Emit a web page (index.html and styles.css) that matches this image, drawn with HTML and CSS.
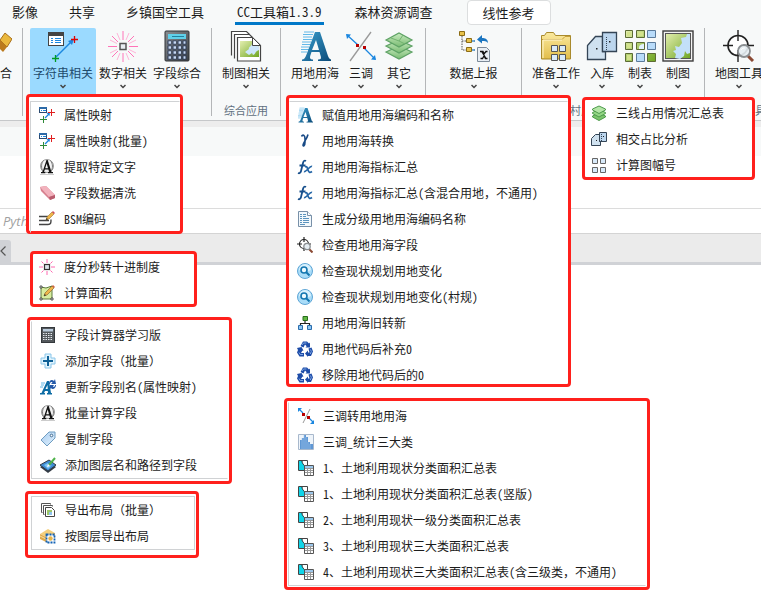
FILE: index.html
```html
<!DOCTYPE html>
<html lang="zh-CN">
<head>
<meta charset="utf-8">
<title>CC工具箱1.3.9</title>
<link rel="stylesheet" href="styles.css">
</head>
<body>
<svg class="sprite" aria-hidden="true">
  <defs>
    <linearGradient id="blueA" x1="0" y1="0" x2="1" y2="1"><stop offset="0" stop-color="#3aa0d0"/><stop offset="1" stop-color="#0b4a78"/></linearGradient>
    <linearGradient id="greenG" x1="0" y1="0" x2="1" y2="1"><stop offset="0" stop-color="#e4efb0"/><stop offset="1" stop-color="#6fa521"/></linearGradient>
    <linearGradient id="layerG" x1="0" y1="0" x2="0" y2="1"><stop offset="0" stop-color="#c9ecc0"/><stop offset="1" stop-color="#79bb72"/></linearGradient>
    <linearGradient id="folderG" x1="0" y1="0" x2="0" y2="1"><stop offset="0" stop-color="#fbeaa0"/><stop offset="1" stop-color="#e2bd4a"/></linearGradient>
    <linearGradient id="calcG" x1="0" y1="0" x2="1" y2="1"><stop offset="0" stop-color="#8a8e92"/><stop offset="1" stop-color="#3c4044"/></linearGradient>
    <linearGradient id="skyG" x1="0" y1="0" x2="1" y2="1"><stop offset="0" stop-color="#a9cdf0"/><stop offset="1" stop-color="#e2f1fd"/></linearGradient>
  </defs>

  <symbol id="map-attr" viewBox="0 0 32 32">
    <path d="M9 27 25 11" stroke="#1b87e0" stroke-width="1.4"/><path d="m27 9-2 6-4-4z" fill="#1b87e0"/>
    <rect x="1.500" y="2.500" width="15" height="13" fill="#fff" stroke="#444"/><path d="M2 3h14v3H2z" fill="#444"/>
    <path d="M4 8.500h2m2 0h6M4 10.500h2m2 0h6M4 12.500h2m2 0h6" stroke="#1b87e0"/>
    <path d="M24 9.500h7M27.500 6v7" stroke="#e00000" stroke-width="1.300"/><path d="M5 28.500h7M8.500 25v7" stroke="#009a20" stroke-width="1.300"/>
  </symbol>
  <symbol id="map-attr-s" viewBox="0 0 16 16">
    <rect x=".5" y=".5" width="7" height="5" fill="#fff" stroke="#2c4a70"/><path d="M0 0h8v2H0z" fill="#2c6aa8"/><path d="M2 3.500h1m1 0h3" stroke="#1b87e0"/>
    <path d="m6 11 4-4" stroke="#1b87e0" stroke-width="1.300"/><path d="m11 5-.5 4L7.500 6z" fill="#1b87e0"/>
    <path d="M9 5.500h7M12.500 2v7" stroke="#e02020"/><path d="M1 12.500h7M4.500 9v7" stroke="#2e8a38"/>
  </symbol>
  <symbol id="spark" viewBox="0 0 32 32">
    <path d="M16 1v9M16 23v9M1 16.500h9M22 16.500h9M5 6l6 6M27 6l-6 6M5 27l6-6M27 27l-6-6" stroke="#ff74b8"/>
    <path d="M10 3l3 7M22 3l-3 7M10 30l3-7M22 30l-3-7M3 10l7 3.500M29 10l-7 3.500M3 23l7-3.500M29 23l-7-3.500" stroke="#ffb4d8"/>
    <rect x="13" y="13.500" width="6" height="6" fill="#e8eef2" stroke="#555" stroke-width="1.500"/>
  </symbol>
  <symbol id="spark-s" viewBox="0 0 16 16">
    <path d="M8 0v4M8 12v4M0 8h4M12 8h4M2.500 2.500l2 2M13.500 2.500l-2 2M2.500 13.500l2-2M13.500 13.500l-2-2" stroke="#ff68b0"/>
    <rect x="5.500" y="5.500" width="5" height="5" fill="#dbe6ec" stroke="#333" stroke-width="1.200"/>
  </symbol>
  <symbol id="calc" viewBox="0 0 32 32">
    <rect x="4" y="1" width="24" height="30" rx="1" fill="url(#calcG)" stroke="#2e3236"/><path d="M7 4h18v5H7z" fill="#5fd0ea"/><path d="M11 6.500h12" stroke="#23809c"/>
    <path d="M6.500 12.500h19M6.500 17.500h19M6.500 22.500h19M6.500 27.500h19" stroke="#2b3b5a" stroke-width="4" stroke-dasharray="4 1"/>
    <path d="M7.500 12.500h17M7.500 17.500h17M7.500 22.500h17M7.500 27.500h17" stroke="#c7d8f0" stroke-width="2.500" stroke-dasharray="2.500 2.500"/>
  </symbol>
  <symbol id="calc-s" viewBox="0 0 16 16">
    <rect x="1.500" y=".5" width="13" height="15" fill="#53585c" stroke="#34383c"/><path d="M3 2h10v2.500H3z" fill="#bcd"/>
    <path d="M3 6.500h10M3 8.500h10M3 10.500h10M3 12.500h10" stroke="#e4e8ee" stroke-dasharray="1.500 1"/>
  </symbol>
  <symbol id="maps" viewBox="0 0 32 32">
    <path d="M1.500 25.500v-24h15l3 3" fill="#fff" stroke="#444" stroke-width="1.200"/><path d="M4.500 28.500v-24h15l3 3" fill="#fff" stroke="#444" stroke-width="1.200"/>
    <path d="M7.500 7.500h15l8 8V31h-23z" fill="#fff" stroke="#444" stroke-width="1.200"/>
    <path d="M10 11h13l6 6v10H10z" fill="url(#greenG)"/><path d="M22 14c-1 3-4 3-3 5l-4 3 4 3 3-2 1 2c3-1 2-4 6-5v-3l-5-5z" fill="#cde6fb"/><path d="M22.500 7.500v8h8z" fill="#fff" stroke="#444"/>
  </symbol>
  <symbol id="letter-a" viewBox="0 0 32 32">
    <path d="M5 2h10M4 4.500h10M4 7h9M4 9.500h9M3 12h9M3 14.500h9M2 17h8M2 19.500h8M2 22h6" stroke="#62b8e8" stroke-width="1"/>
    <path fill-rule="evenodd" d="M16 2h5l8 24c.7 2 1.500 3 3 3.500V31H19v-1.500c3 0 3.500-1 2.500-4l-1-3.500h-8l-1 3c-1 3-.4 4.500 2.500 4.500V31H3v-1.500c2 0 3.500-2 4.500-5zM17 10l-4 10h7z" fill="url(#blueA)"/>
  </symbol>
  <symbol id="split" viewBox="0 0 32 32">
    <path d="M5 31 26 2" stroke="#999" stroke-width="1.300"/><path d="m2 5 11 10M19 18l11 11" stroke="#1b87e0" stroke-width="1.300"/>
    <path d="m1 4 5 .5L2 9zM31 30l-5-.5 4-4.500z" fill="#1b87e0"/><path d="M11 14h3v3h-3zM18 16h3v3h-3z" fill="#b80000"/>
  </symbol>
  <symbol id="split-s" viewBox="0 0 16 16">
    <path d="M5 15 12 1" stroke="#999"/><path d="m1 1 4 4M11 10l4 4" stroke="#1b87e0" stroke-width="1.200"/><path d="M0 0h4L0 4zM16 16h-4l4-4z" fill="#1b87e0"/><path d="M4 5h3v3H4zM9 8h3v3H9z" fill="#b80000"/>
  </symbol>
  <symbol id="layers" viewBox="0 0 32 32">
    <g stroke="#5ea265" stroke-width="1.200"><path d="m3 22 13-6 13 6-13 7z" fill="url(#layerG)"/><path d="m3 16 13-6 13 6-13 7z" fill="url(#layerG)"/><path d="m3 10 13-7 13 7-13 7z" fill="url(#layerG)"/></g>
    <path d="m8 8 8 3 4-6M16 11l6 3" fill="none" stroke="#72b36f"/>
  </symbol>
  <symbol id="layers-s" viewBox="0 0 16 16">
    <g stroke="#4d9a4c"><path d="m1.500 11 6.500-3 6.500 3v1L8 15.500 1.500 12z" fill="#7cc56c"/><path d="m1.500 7.500 6.500-3 6.500 3v1L8 12 1.500 8.500z" fill="#93d684"/><path d="m1.500 4 6.500-3 6.500 3v1L8 8.500 1.500 5z" fill="#b4e6a6"/></g>
  </symbol>
  <symbol id="tree-x" viewBox="0 0 32 32">
    <path d="M4 6v14h5M4 11h5M13 11h4M13 20h4" fill="none" stroke="#555" stroke-dasharray="1.500 1"/><path d="M13 11h4M13 20h4" stroke="#1b87e0"/>
    <g fill="#e8c24a" stroke="#8c6c14"><path d="M1.500 1.500h5v4h-5zM8.500 8.500h5v4h-5zM8.500 17.500h5v4h-5z"/></g>
    <path d="M30 13c0-4-3-5-6-5V5l-5 4.500 5 4V11c3 0 4 0 6 2z" fill="#1b75c0"/>
    <path d="M19.500 17.500h9l3 3v11h-12z" fill="#e8eef4" stroke="#7c8a98"/>
    <path d="M22 21.500h3l1 2.500 2-2.500h1.500M22.500 28.500h2l1.500-2.500 1.500 2.500h2M24 22l4 6.500" fill="none" stroke="#111" stroke-width="1.300"/>
  </symbol>
  <symbol id="folder" viewBox="0 0 32 32">
    <path d="M1.500 29V5.500h3l2-3h7l2 3h15V29z" fill="url(#folderG)" stroke="#a98a2c"/><path d="M2 9.500h20l3-3h5" fill="none" stroke="#c7a03a"/>
    <path d="M3 10v18M3 10h19" stroke="#fff6cf"/>
    <path d="M11.500 15.500h6v6h-6zM19.500 15.500h6v6h-6zM11.500 24.500h6v6h-6zM19.500 24.500h6v6h-6z" fill="#d8eafa" stroke="#555"/>
  </symbol>
  <symbol id="parcel" viewBox="0 0 32 32">
    <path d="M1.500 29.500v-14l8-9h7v15h3v8z" fill="#cfe1ef" stroke="#344556" stroke-width="1.300"/><path d="M16.500 2.500h14v19h-14z" fill="#bcd6ee" stroke="#344556" stroke-width="1.300"/>
    <path d="M20.500 7v13" stroke="#344556" stroke-dasharray="1 1"/><path d="M23 11h1.500v1.500H23zM10 18h1.500v1.500H10z" fill="#222"/>
  </symbol>
  <symbol id="parcel-s" viewBox="0 0 16 16">
    <path d="M.5 14.500V7.500l4-4h4v7h1v4z" fill="#cfe1ef" stroke="#344556"/><path d="M8.500 1.500h7v9h-7z" fill="#bcd6ee" stroke="#344556"/><path d="M10.500 3v7" stroke="#344556" stroke-dasharray="1 1"/><path d="M12 5h1v1h-1zM5 9h1v1H5z" fill="#222"/>
  </symbol>
  <symbol id="grid9" viewBox="0 0 32 32">
    <g fill="url(#greenG)" stroke="#5d6c34"><path d="M1.500.5h7v7h-7zM12.500.5h8v7h-8zM1.500 12.500h7v7h-7zM12.500 12.500h8v7h-8zM1.500 23.500h7v8h-7zM23.500 23.500h8v8h-8z"/></g>
    <g fill="#b9dcfa" stroke="#5c7c9c"><path d="M23.500.5h8v7h-8zM23.500 12.500h8v7h-8zM12.500 23.500h8v8h-8z"/></g><path d="M15 18c0-3 2-4 5-4v5h-5z" fill="#e3f2fe"/>
    <path d="M3 2h4v4H3zM14 2h5v4h-5zM3 14h4v4H3zM3 25h4v5H3z" fill="#d3e28c"/>
  </symbol>
  <symbol id="map" viewBox="0 0 32 32">
    <rect x="1" y="1" width="30" height="30" fill="#f4f4f4" stroke="#3d3d3d" stroke-width="1.400"/><rect x="3.500" y="3.500" width="25" height="25" fill="url(#greenG)" stroke="#555"/>
    <path d="M28 4v19l-3 1-2-3-1 5-4 3-5-1 1-4-3-3 3-1-1-4 4 1 3-4-1-5 5-1 1-3z" fill="#c3e0f9"/>
  </symbol>
  <symbol id="target" viewBox="0 0 32 32">
    <circle cx="15" cy="15.500" r="10" fill="#fff" stroke="#222" stroke-width="1.600"/><path d="M15 0v11M15 20v12M0 15.500h10M20 15.500h11" stroke="#222" stroke-width="1.400"/>
    <path d="m24 25 6 6" stroke="#8b4a34" stroke-width="3"/><circle cx="21" cy="21" r="6" fill="#e5edf2" fill-opacity=".9" stroke="#8b8f92" stroke-width="1.800"/>
    <path d="M18 20c1-2 3-2 4-2" fill="none" stroke="#fff"/>
  </symbol>
  <symbol id="target-s" viewBox="0 0 16 16">
    <circle cx="7" cy="7" r="4.500" fill="#fff" stroke="#222" stroke-width="1.200"/><path d="M7 0v5M7 11v3M0 7h5M11 7h3" stroke="#222" stroke-width="1.200"/>
    <path d="m12 12 3.500 3.500" stroke="#8b4a34" stroke-width="2"/><circle cx="10" cy="9.500" r="3.200" fill="#e5edf2" stroke="#8b8f92" stroke-width="1.300"/>
  </symbol>
  <symbol id="gold" viewBox="0 0 32 32"><path d="m20 10 5-7 7 6-5 8z" fill="#eab83d" stroke="#a9701b"/><path d="m20 10 7 7-4 5-7-7z" fill="#bb7a1d"/></symbol>

  <symbol id="globe-a" viewBox="0 0 16 16">
    <circle cx="8" cy="7" r="6.500" fill="#f4f4f4" stroke="#999"/><path d="M4.500 1.500C2 4 2 9 4 13M11.500 1.500c2.500 3 2.500 8 .5 11" fill="none" stroke="#777"/><path d="M1 15.500h14" stroke="#ccc"/>
    <path fill-rule="evenodd" d="M7.500 1h1.200l3.800 12h1.500v1.200H9V13h1.200l-.8-2.500H5.800L5 13h1.300v1.200H2V13h1.500zM7.700 4.500 6.200 9.300H9z" fill="#111"/>
  </symbol>
  <symbol id="eraser" viewBox="0 0 16 16"><path d="m1 2 6-1 9 9v3l-5 2-9-9z" fill="#d7818f"/><path d="m1 2 6-1 9 9-6 2z" fill="#f2b2bd"/><path d="m10 12 6-2v3l-5 2z" fill="#b85a6c"/></symbol>
  <symbol id="edit" viewBox="0 0 16 16"><path d="M0 5.500h9M0 9.500h10M0 13.500h9c3 0 3-2 3-5" fill="none" stroke="#444" stroke-width="1.400"/><path d="m7 9 1-3 5-5 2 2-5 5z" fill="#efb64a" stroke="#9a7430" stroke-width=".6"/><path d="m13 1 1-1 2 2-1 1z" fill="#d04a5a"/><path d="m7 9 .7-2L9 8.300z" fill="#222"/></symbol>
  <symbol id="area" viewBox="0 0 16 16"><path d="m2 2 5 1 6-2v13H2z" fill="#d8eda0" stroke="#5c7a3c"/><path d="M1 1h2v2H1zM12 13h2v2h-2zM1 13h2v2H1z" fill="#fff" stroke="#333" stroke-width=".8"/><path d="m5 11 1-3 7-7 2 2-7 7z" fill="#efb64a" stroke="#7a5a28" stroke-width=".6"/><path d="m13 1 1-1 2 2-1 1z" fill="#d06040"/><path d="m5 11 .8-2L7 10.300z" fill="#222"/></symbol>
  <symbol id="plus" viewBox="0 0 16 16"><path d="M5 1h6v4h4v6h-4v4H5v-4H1V5h4z" fill="#dff3fd" stroke="#8ac6ea"/><path d="M8 3v10M3 8h10" stroke="#0c5f96" stroke-width="2"/></symbol>
  <symbol id="a-refresh" viewBox="0 0 16 16"><path d="M1 4h4M1 6h3M0 8h3" stroke="#62b8e8"/><path fill-rule="evenodd" d="M7 2h2l2 12h1v1.500H7V14h1l-.2-2H5l-1 2h1v1.500H0V14h1.500zM7.500 6l-2 4h2.200z" fill="#0d6ca4"/><path d="M9 5c0-4 3-5 5-3l1-2 1 5h-5l1.500-1.500C11 2.500 10 3.500 10 5zM16 6c0 4-4 5-5 3l-1 1V6h4l-1 1.500c1 1 2 0 2-1.500z" fill="#2358a8"/></symbol>
  <symbol id="tag" viewBox="0 0 16 16"><path d="M1 9 9 1h6v6l-8 8z" fill="url(#skyG)" stroke="#6e9cc0" stroke-linejoin="round"/><circle cx="11.500" cy="4.500" r="1.300" fill="#fff" stroke="#446c90"/></symbol>
  <symbol id="layer-path" viewBox="0 0 16 16"><path d="m0 10 9-5 7 5-8 6z" fill="#333b44"/><path d="m0 8 9-5 7 5-8 6z" fill="#3d8bd4" stroke="#303c48"/><path d="m4 8 4-2 1 3 3-1-4 4z" fill="#7bc4f2"/><path d="m9 8 6-7" stroke="#4eb34a" stroke-width="2"/><path d="m7 10 1-3 2 2z" fill="#fff"/></symbol>
  <symbol id="maps-s" viewBox="0 0 16 16"><path d="M2.500 10.500h-1v-9h9v1M4.500 12.500h-1v-9h9v1" fill="none" stroke="#555"/><path d="M5.500 5.500h6l3 3v6h-9z" fill="#fff" stroke="#444"/><path d="M7 8h5v5H7z" fill="#9bc76a"/><path d="M9 10h3v3H9z" fill="#8fc3ee"/></symbol>
  <symbol id="layer-export" viewBox="0 0 16 16"><path d="m0 6 8-5 7 4-7 5z" fill="#f4cf7c"/><path d="m0 6 8 4v5l-8-4z" fill="#e0a94a"/><path d="m8 10 7-5v5l-7 5z" fill="#cf9334"/><path d="M0 8l8 4 7-5" fill="none" stroke="#f8dfa0"/><path d="M6.500 6.500h8v8h-8z" fill="#fff" stroke="#1262b4" stroke-width="1.800" stroke-dasharray="2 1"/><circle cx="10.500" cy="10.500" r="2.200" fill="#e8b64c"/></symbol>
  <symbol id="gamma" viewBox="0 0 16 16"><path d="M4.500 3.500C6 1 8 2 8 6v3c0 4-2 5-2 3 0-2 4-6 5-10.500" fill="none" stroke="#184a86" stroke-width="1.600"/></symbol>
  <symbol id="fx" viewBox="0 0 16 16"><path d="M1 14c2 1 3-1 3.500-4L6 4c.5-2 1.500-3 3-2M2.500 6.500h6" fill="none" stroke="#174f8c" stroke-width="1.800"/><path d="M8 8c2-1 2 0 3 3s2 3 4 1.500M15 7.500c-2-1-6 6-8 5" fill="none" stroke="#2465a6" stroke-width="1.700"/></symbol>
  <symbol id="doc" viewBox="0 0 16 16"><path d="M1.500.5h9l4 4v11h-13z" fill="#f2f8fc" stroke="#7890a8"/><path d="M10.500.5v4h4" fill="#fff" stroke="#7890a8"/><path d="M3 3.500h2m1 0h3M3 5.500h2m1 0h3M3 7.500h2m1 0h6M3 9.500h2m1 0h6M3 11.500h2m1 0h6M3 13.500h5" stroke="#5b93be"/></symbol>
  <symbol id="lens" viewBox="0 0 16 16"><circle cx="8" cy="8" r="7.500" fill="#a9dcf8" stroke="#5fa6d6"/><path d="M2 7a6 6 0 0 1 12 0c-4 2-8 2-12 0z" fill="#d9f1fd"/><circle cx="7" cy="7" r="3" fill="#eefaff" stroke="#1476b0" stroke-width="1.600"/><path d="m9 9 3.500 3.500" stroke="#1476b0" stroke-width="2"/></symbol>
  <symbol id="org" viewBox="0 0 16 16"><path d="M8 5v4M3.500 11V8.500h9V11" fill="none" stroke="#222" stroke-width="1.200"/><path d="M6 1.500h4.500v4H6z" fill="#62b944" stroke="#286c1c"/><path d="M1.500 10.500h4v4h-4zM10.500 10.500h4v4h-4z" fill="#8cc6f4" stroke="#2a6cac"/></symbol>
  <symbol id="recycle" viewBox="0 0 16 16"><g fill="#1d4ca8"><path d="m3.500 5 2.500-4.500h4l2 2 1-1v5H8.500l1.200-1.300L8 3.500 6.500 6.500z"/><path d="m0 7 4.500-1 2 3.500-1.200.2L4 12h3v3.500H2.500L0 11.500 1 9z"/><path d="m11.500 7.500 3-1 1.500 4-2 4.500h-3v1l-3-3.500 3-3v2h1.500z"/></g><path d="m5 4 1.500-2h3M2 11.500l1.200 2H6M13.500 8.500l.8 2-1 2.500" fill="none" stroke="#7ea6e4"/></symbol>
  <symbol id="hist" viewBox="0 0 16 16"><path d="M.5.5h15v15H.5z" fill="#eef4fa" stroke="#a8b8cc"/><path d="M2 15V6h2v9zM4 15V4h2v11zM6 15V1h2v14zM8 15V3h2v12zM10 15V8h2v7zM12 15v-5h3v5z" fill="#5f97d4"/><path d="M4 4v11M6 1v14M8 3v12M10 8v7M12 10v5" stroke="#a9cbee" stroke-width=".6"/></symbol>
  <symbol id="to-table" viewBox="0 0 16 16"><path d="M.5.5h9v10h-9z" fill="#fff" stroke="#444"/><path d="M1 1h3c0 4 4 4 4 9H1z" fill="#11d5e8"/><path d="M4 1c0 4 4 4 4 9" fill="none" stroke="#222"/><path d="M6.500 5.500h9v10h-9z" fill="#fff" stroke="#555"/><path d="M7 6h8v2H7z" fill="#9cc6ea"/><path d="M7 8.500h8M7 10.500h8M7 12.500h8M9.500 8v7M12.500 8v7" stroke="#999"/></symbol>
  <symbol id="grid4" viewBox="0 0 16 16"><path d="M1.500 1.500h5v5h-5zM9.500 1.500h5v5h-5zM1.500 10.500h5v5h-5zM9.500 10.500h5v5h-5z" fill="#d8eafa" stroke="#666"/></symbol>
  <symbol id="chev" viewBox="0 0 6 5"><path d="m.5 1 2.500 2.500L5.500 1" fill="none" stroke="#444" stroke-width="1.500"/></symbol>
</svg>

<header class="ribbon">
  <nav class="tabs">
    <a href="#">影像</a><a href="#">共享</a><a href="#">乡镇国空工具</a><a href="#" class="active">CC工具箱1.3.9</a><a href="#">森林资源调查</a><a href="#" class="context">线性参考</a>
  </nav>
  <div class="groups">
    <section class="group clipped"><div class="tools"><button class="tool"><svg class="big"><use href="#gold"/></svg><span>综合</span></button></div></section>
    <section class="group"><div class="tools">
      <button class="tool open"><svg class="big"><use href="#map-attr"/></svg><span>字符串相关</span><svg class="chev"><use href="#chev"/></svg></button>
      <button class="tool"><svg class="big"><use href="#spark"/></svg><span>数字相关</span><svg class="chev"><use href="#chev"/></svg></button>
      <button class="tool"><svg class="big"><use href="#calc"/></svg><span>字段综合</span><svg class="chev"><use href="#chev"/></svg></button>
    </div></section>
    <section class="group"><div class="tools">
      <button class="tool"><svg class="big"><use href="#maps"/></svg><span>制图相关</span><svg class="chev"><use href="#chev"/></svg></button>
    </div><h2>综合应用</h2></section>
    <section class="group"><div class="tools">
      <button class="tool"><svg class="big"><use href="#letter-a"/></svg><span>用地用海</span><svg class="chev"><use href="#chev"/></svg></button>
      <button class="tool"><svg class="big"><use href="#split"/></svg><span>三调</span><svg class="chev"><use href="#chev"/></svg></button>
      <button class="tool"><svg class="big"><use href="#layers"/></svg><span>其它</span><svg class="chev"><use href="#chev"/></svg></button>
    </div></section>
    <section class="group report"><div class="tools">
      <button class="tool"><svg class="big"><use href="#tree-x"/></svg><span>数据上报</span><svg class="chev"><use href="#chev"/></svg></button>
    </div></section>
    <section class="group village"><div class="tools">
      <button class="tool"><svg class="big"><use href="#folder"/></svg><span>准备工作</span><svg class="chev"><use href="#chev"/></svg></button>
      <button class="tool"><svg class="big"><use href="#parcel"/></svg><span>入库</span><svg class="chev"><use href="#chev"/></svg></button>
      <button class="tool"><svg class="big"><use href="#grid9"/></svg><span>制表</span><svg class="chev"><use href="#chev"/></svg></button>
      <button class="tool"><svg class="big"><use href="#map"/></svg><span>制图</span><svg class="chev"><use href="#chev"/></svg></button>
    </div><h2>村庄</h2></section>
    <section class="group last"><div class="tools">
      <button class="tool"><svg class="big"><use href="#target"/></svg><span>地图工具</span><svg class="chev"><use href="#chev"/></svg></button>
    </div><h2>工具</h2></section>
  </div>
</header>
<main>
  <div class="toolbar"></div>
  <div class="history"></div>
  <input class="prompt" type="text" placeholder="Python" aria-label="Python">
  <div class="docbar"><button class="back" aria-label="后退"><svg viewBox="0 0 6 10"><path d="M5.500.5 1 5l4.500 4.500" fill="none" stroke="#555" stroke-width="1.200"/></svg></button></div>
</main>

<div class="frame strings"><div class="menu">
  <button><svg><use href="#map-attr-s"/></svg><span>属性映射</span></button>
  <button><svg><use href="#map-attr-s"/></svg><span>属性映射(批量)</span></button>
  <button><svg><use href="#globe-a"/></svg><span>提取特定文字</span></button>
  <button><svg><use href="#eraser"/></svg><span>字段数据清洗</span></button>
  <button><svg><use href="#edit"/></svg><span>BSM编码</span></button>
</div></div>
<div class="frame numbers"><div class="menu">
  <button><svg><use href="#spark-s"/></svg><span>度分秒转十进制度</span></button>
  <button><svg><use href="#area"/></svg><span>计算面积</span></button>
</div></div>
<div class="frame fields"><div class="menu">
  <button><svg><use href="#calc-s"/></svg><span>字段计算器学习版</span></button>
  <button><svg><use href="#plus"/></svg><span class="full">添加字段（批量）</span></button>
  <button><svg><use href="#a-refresh"/></svg><span>更新字段别名(属性映射)</span></button>
  <button><svg><use href="#globe-a"/></svg><span>批量计算字段</span></button>
  <button><svg><use href="#tag"/></svg><span>复制字段</span></button>
  <button><svg><use href="#layer-path"/></svg><span>添加图层名和路径到字段</span></button>
</div></div>
<div class="frame layouts"><div class="menu">
  <button><svg><use href="#maps-s"/></svg><span class="full">导出布局（批量）</span></button>
  <button><svg><use href="#layer-export"/></svg><span>按图层导出布局</span></button>
</div></div>
<div class="frame landuse"><div class="menu">
  <button><svg><use href="#letter-a"/></svg><span>赋值用地用海编码和名称</span></button>
  <button><svg><use href="#gamma"/></svg><span>用地用海转换</span></button>
  <button><svg><use href="#fx"/></svg><span>用地用海指标汇总</span></button>
  <button><svg><use href="#fx"/></svg><span>用地用海指标汇总(含混合用地<span class="full">，</span>不通用)</span></button>
  <button><svg><use href="#doc"/></svg><span>生成分级用地用海编码名称</span></button>
  <button><svg><use href="#target-s"/></svg><span>检查用地用海字段</span></button>
  <button><svg><use href="#lens"/></svg><span>检查现状规划用地变化</span></button>
  <button><svg><use href="#lens"/></svg><span>检查现状规划用地变化(村规)</span></button>
  <button><svg><use href="#org"/></svg><span>用地用海旧转新</span></button>
  <button><svg><use href="#recycle"/></svg><span>用地代码后补充0</span></button>
  <button><svg><use href="#recycle"/></svg><span>移除用地代码后的0</span></button>
</div></div>
<div class="frame survey"><div class="menu">
  <button><svg><use href="#split-s"/></svg><span>三调转用地用海</span></button>
  <button><svg><use href="#hist"/></svg><span>三调_统计三大类</span></button>
  <button><svg><use href="#to-table"/></svg><span>1、土地利用现状分类面积汇总表</span></button>
  <button><svg><use href="#to-table"/></svg><span>1、土地利用现状分类面积汇总表(竖版)</span></button>
  <button><svg><use href="#to-table"/></svg><span>2、土地利用现状一级分类面积汇总表</span></button>
  <button><svg><use href="#to-table"/></svg><span>3、土地利用现状三大类面积汇总表</span></button>
  <button><svg><use href="#to-table"/></svg><span>4、土地利用现状三大类面积汇总表(含三级类<span class="full">，</span>不通用)</span></button>
</div></div>
<div class="frame others"><div class="menu">
  <button><svg><use href="#layers-s"/></svg><span>三线占用情况汇总表</span></button>
  <button><svg><use href="#parcel-s"/></svg><span>相交占比分析</span></button>
  <button><svg><use href="#grid4"/></svg><span>计算图幅号</span></button>
</div></div>
</body>
</html>
```
FILE: styles.css
```css
* { box-sizing: border-box; }

body {
  margin: 0;
  min-height: 100vh;
  overflow: hidden;
  background: #fff;
  color: #1c1c1c;
  font: 12px/14px "Noto Sans CJK SC", sans-serif;
  font-feature-settings: "hwid";
}

button {
  margin: 0;
  border: 0;
  background: none;
  color: inherit;
  font: inherit;
  font-feature-settings: inherit;
  white-space: nowrap;
}

.sprite { position: absolute; width: 0; height: 0; }

/* Keeps full-width punctuation at its full width */
.full { font-feature-settings: normal; }

/* Ribbon */
.ribbon {
  background: #f7f9f9;
  border-bottom: 1px solid #c6c8ca;
  overflow: hidden;
}

.tabs {
  display: flex;
  gap: 31px;
  height: 28px;
  padding-left: 12px;
  font-size: 13px;
  line-height: 24px;
  white-space: nowrap;
}
.tabs a { color: inherit; text-decoration: none; }
.tabs .active {
  height: 25px;
  padding: 0 2px;
  border-bottom: 3px solid #0078c8;
}
.tabs .context {
  height: 25px;
  margin-left: 3px;
  padding: 0 15px;
  background: #fff;
  border: 1px solid #dcdedf;
  border-radius: 4px;
}

.groups { display: flex; height: 92px; padding-bottom: 4px; }
.group {
  flex: none;
  display: flex;
  flex-direction: column;
  justify-content: space-between;
  padding: 0 7px;
  border-right: 1px solid #b4b6b8;
}
.group h2 {
  margin: 0 0 -1px;
  color: #607080;
  font-size: 11px;
  font-weight: 400;
  line-height: 14px;
  text-align: center;
  white-space: nowrap;
}
.group.clipped { width: 23px; align-items: flex-end; }
.group.clipped .tool { align-items: flex-end; }
.group.report { width: 96px; align-items: center; }
.group.village h2 { padding-left: 41px; text-align: left; }
.group.last { padding-right: 0; border: 0; }
.group.last h2 { text-align: right; }

.tools { display: flex; }
.tool {
  flex: none;
  display: flex;
  flex-direction: column;
  align-items: center;
  gap: 4px;
  height: 71px;
  padding: 2px 3px 0;
}
.tool.open { background: #9bdaff; color: #1e4a6c; border-radius: 2px; }
.big { width: 32px; height: 32px; }
.chev { width: 6px; height: 5px; }

/* Work area behind the menus */
.toolbar {
  height: 35px;
  background: #f7f9f9;
  border-top: 6px solid #ededed;
}
.history { height: 53px; border-bottom: 1px solid #dcdcdc; }
.prompt {
  display: block;
  width: 100%;
  height: 24px;
  padding: 0 3px;
  border: 0;
  background: #fff;
  font: italic 13px "Open Sans", sans-serif;
}
.prompt::placeholder { color: #a0a0a0; opacity: 1; }
.docbar {
  display: flex;
  align-items: flex-end;
  height: 32px;
  background: #ebebeb;
  border-top: 1px solid #d4d4d4;
  border-bottom: 3px solid #d0d2d6;
}
.back {
  width: 11px;
  height: 22px;
  padding: 0;
  background: #d0d2d6;
  border-radius: 0 3px 0 0;
}
.back svg { display: block; width: 6px; height: 10px; }

/* Opened menus, each in its highlight frame */
.frame {
  position: absolute;
  padding: 1px;
  background: #fff;
  border: 3px solid #ff201c;
  border-radius: 4px;
}
.menu {
  display: flex;
  flex-direction: column;
  border: 1px solid transparent;
}
.menu button {
  display: flex;
  align-items: center;
  gap: 9px;
  height: 26px;
  padding: 0 8px;
}
.menu svg { flex: none; width: 16px; height: 16px; }

.strings { left: 26px; top: 94px; width: 157px; padding: 4px 0 0 1px; }
.strings .menu { margin-bottom: -2px; border-color: #d0d2d4 transparent transparent #d0d2d4; }
.numbers { left: 30px; top: 251px; width: 167px; padding: 0; }
.numbers .menu { margin-bottom: -2px; border: 0; }
.numbers button { padding-left: 6px; }
.fields { left: 27px; top: 317px; width: 205px; padding-bottom: 2px; }
.fields .menu { border-color: transparent transparent #d0d2d4 #d0d2d4; }
.layouts { left: 25px; top: 491px; width: 174px; padding: 2px 1px 5px 3px; }
.layouts .menu { border-color: #d0d2d4; }
.landuse { left: 286px; top: 95px; width: 285px; padding: 3px 0 0; }
.landuse .menu { margin-bottom: -4px; border-color: #d0d2d4 transparent transparent; border-bottom: 0; }
.landuse button { padding-left: 7px; }
.survey { left: 284px; top: 398px; width: 366px; }
.survey .menu { border-color: transparent transparent #d0d2d4 #d0d2d4; }
.survey button { padding-left: 9px; }
.others { left: 582px; top: 97px; width: 173px; padding: 0; }
.others .menu { margin-bottom: -1px; border: 0; }
.others button { padding-left: 6px; }
```
